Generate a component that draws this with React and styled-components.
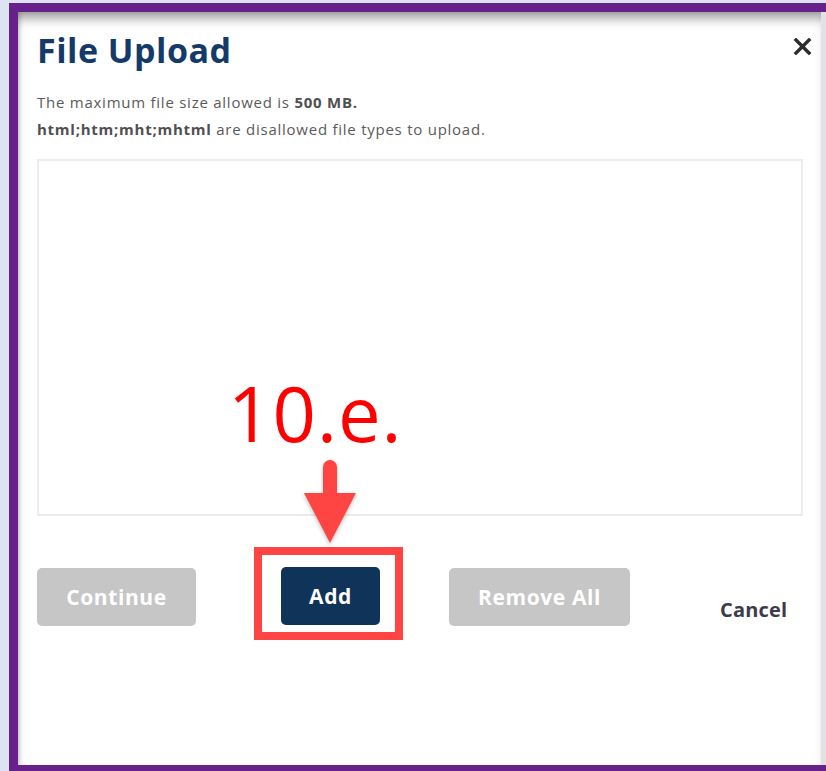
import React from 'react';
import styled, { createGlobalStyle } from 'styled-components';

const GlobalStyle = createGlobalStyle`
  html, body {
    margin: 0;
    padding: 0;
    background: #dce4f4;
    font-family: "Open Sans", "Liberation Sans", sans-serif;
  }
  * { box-sizing: border-box; }
`

const Page = styled.div`
  width: 826px;
  height: 771px;
  padding: 3px 0 0 9px;
  overflow: hidden;
`

const Frame = styled.div`
  height: 768px;
  border-top: 9px solid #66228a;
  border-left: 9px solid #66228a;
  border-bottom: 6px solid #66228a;
  background: linear-gradient(to right, #f4f4f6, #e2e2e6);
  display: flex;
`

const Panel = styled.div`
  position: relative;
  width: 803px;
  background: #fff;
  box-shadow: inset 0 12px 12px -6px rgba(0, 0, 0, 0.4), inset 4px 0 5px -3px rgba(0, 0, 0, 0.25);
  padding: 18px 18px 0 19px;
  display: flex;
  flex-direction: column;
`

const Header = styled.div`
  display: flex;
  justify-content: space-between;
  align-items: flex-start;
`

const Title = styled.h1`
  margin: 0;
  font-size: 34px;
  line-height: 40px;
  font-weight: 700;
  letter-spacing: 0.5px;
  color: #143a6a;
`

const CloseButton = styled.button`
  border: 0;
  background: none;
  padding: 0;
  margin: 8px -9px 0 0;
  width: 19px;
  height: 17px;
  display: flex;
  cursor: pointer;
`

const Info = styled.div`
  margin-top: 19px;
  font-size: 15px;
  line-height: 27px;
  font-weight: 500;
  letter-spacing: 0.75px;
  color: #5a5a5a;
  b { font-weight: 700; color: #505050; }
`

const DropZone = styled.div`
  margin-top: 16px;
  height: 357px;
  border: 2px solid #ececec;
  background: #fff;
`

const Actions = styled.div`
  display: flex;
  align-items: flex-start;
  margin-top: 31px;
`

const Button = styled.button`
  height: 58px;
  width: ${p => p.$w}px;
  margin: ${p => p.$mt || 0}px ${p => p.$mr || 0}px 0 0;
  border: 0;
  border-radius: 5px;
  background: ${p => (p.$primary ? '#0f3359' : '#c6c6c6')};
  color: #fff;
  font-family: "Open Sans", "Liberation Sans", sans-serif;
  font-size: 21px;
  font-weight: 700;
  letter-spacing: 0.6px;
  cursor: pointer;
`

const Highlight = styled.div`
  border: 8px solid #ff4444;
  padding: 12px 15px 7px 19px;
  margin-right: 46px;
`

const CancelLink = styled.a`
  margin: 51px 0 0 0;
  font-size: 20px;
  line-height: 24px;
  font-weight: 700;
  letter-spacing: 0.2px;
  color: #3b3b4b;
  cursor: pointer;
`

const StepLabel = styled.div`
  position: absolute;
  left: 210px;
  top: 363px;
  font-family: "Open Sans", "Liberation Sans", sans-serif;
  font-size: 76px;
  line-height: 76px;
  font-weight: 400;
  letter-spacing: 1px;
  color: #ff0000;
`

const Pointer = styled.svg`
  position: absolute;
  left: 282px;
  top: 443px;
  filter: drop-shadow(0 2px 2px rgba(0, 0, 0, 0.25));
`

function CloseIcon() {
  return (
    <svg width="19" height="17" viewBox="0 0 19 17">
      <path d="M3 2 L16 15 M16 2 L3 15" stroke="#2d2d2d" strokeWidth="3.4" strokeLinecap="square" />
    </svg>
  )
}

export default function App() {
  return (
    <>
      <GlobalStyle />
      <Page>
        <Frame>
          <Panel>
            <Header>
              <Title>File Upload</Title>
              <CloseButton aria-label="Close"><CloseIcon /></CloseButton>
            </Header>
            <Info>
              <div>The maximum file size allowed is <b>500 MB.</b></div>
              <div><b>html;htm;mht;mhtml</b> are disallowed file types to upload.</div>
            </Info>
            <DropZone />
            <Actions>
              <Button $w={159} $mt={21} $mr={58}>Continue</Button>
              <Highlight>
                <Button $w={99} $primary>Add</Button>
              </Highlight>
              <Button $w={181} $mt={21} $mr={90}>Remove All</Button>
              <CancelLink>Cancel</CancelLink>
            </Actions>

            {/* step callout over the dialog */}
            <StepLabel>10.e.</StepLabel>
            <Pointer width="60" height="95" viewBox="0 0 60 95">
              <path d="M23 12 A7 7 0 0 1 37 12 L37 42 L23 42 Z" fill="#ff4444" />
              <polygon points="4,38 56,38 30,88" fill="#ff4444" />
            </Pointer>
          </Panel>
        </Frame>
      </Page>
    </>
  )
}
